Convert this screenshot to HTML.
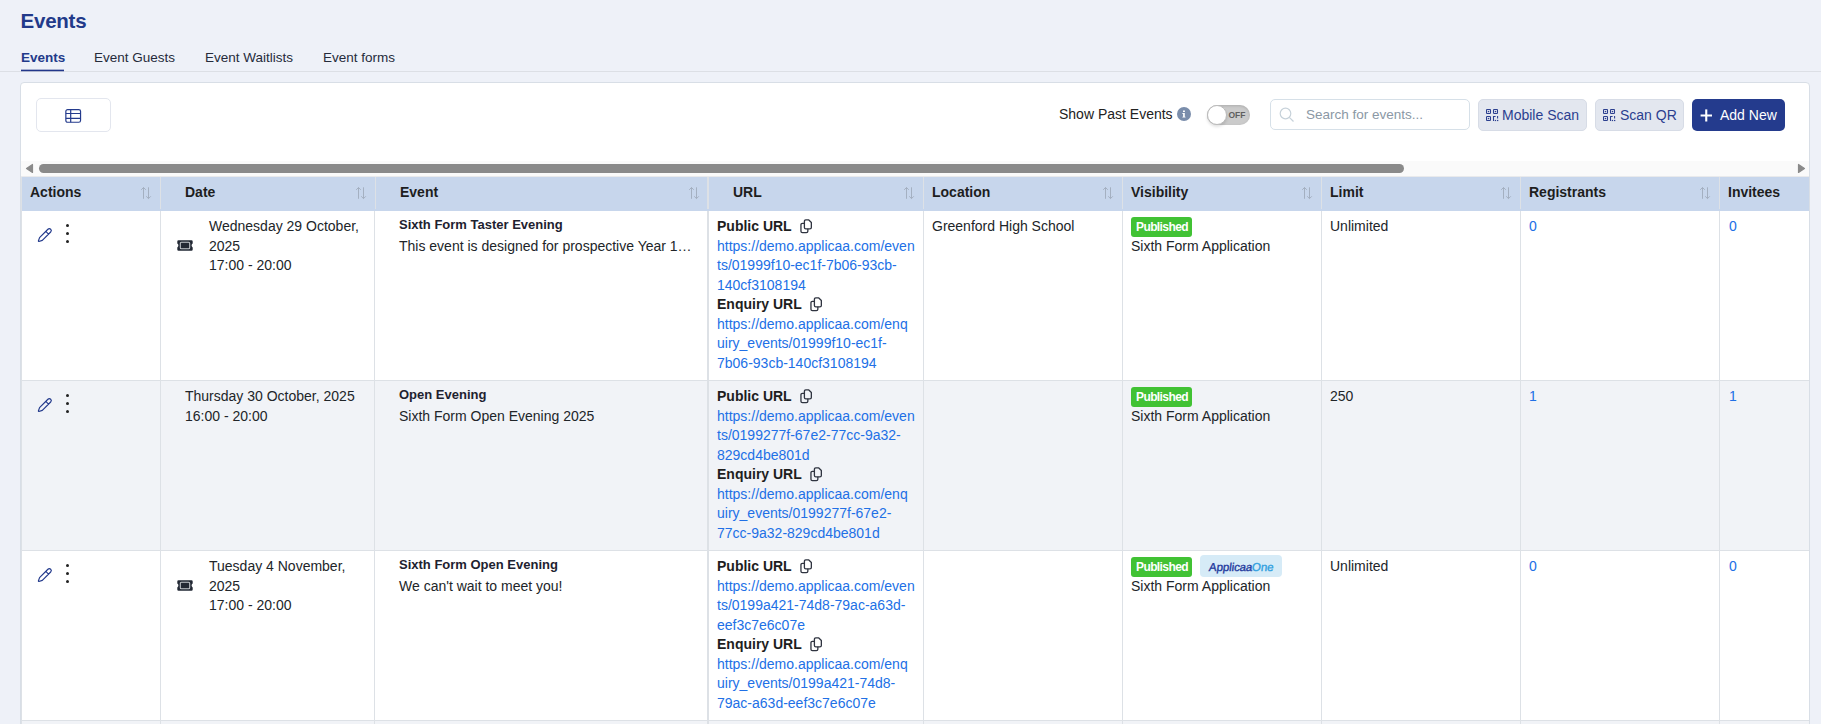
<!DOCTYPE html>
<html><head><meta charset="utf-8">
<style>
*{box-sizing:border-box;margin:0;padding:0}
html,body{width:1821px;height:724px;overflow:hidden}
body{background:#eef1f8;font-family:"Liberation Sans",sans-serif;color:#212529;position:relative;font-size:14px;line-height:19.5px}
.a{position:absolute;white-space:nowrap}
.title{left:20.6px;top:5.6px;font-size:20.5px;line-height:30px;letter-spacing:-0.25px;font-weight:bold;color:#223a8a}
.tab{top:48px;font-size:13.5px;line-height:19px;color:#252b3b}
.tab.on{font-weight:bold;color:#223a8a}
.uline{left:21px;top:70px;width:43px;height:1px;background:#22378a;box-shadow:0 -1px 0 rgba(34,55,138,.35),0 1px 0 rgba(34,55,138,.25)}
.hline{left:0;top:71px;width:1821px;height:1px;background:#dcdfe5}
.card{left:20px;top:82px;width:1790px;height:700px;background:#fff;border:1px solid #d8dee6;border-radius:4px}
.btn-tbl{left:36px;top:98px;width:75px;height:34px;border:1px solid #e3e6ee;border-radius:5px;background:#fff}
.spe{left:1059px;top:105px;font-size:14px;color:#222}
.info{left:1177px;top:107px;width:14px;height:14px;border-radius:50%;background:#7b8eac}
.tog{left:1207px;top:105px;width:43px;height:20px;border-radius:10px;background:#cbcbcb;box-shadow:0 1px 3px rgba(0,0,0,.15) inset}
.knob{left:1207px;top:105px;width:20px;height:20px;border-radius:50%;background:#fff;border:1px solid #bbb;box-shadow:0 2px 3px rgba(0,0,0,.12)}
.off{left:1228.5px;top:109.5px;font-size:8.5px;line-height:11px;font-weight:bold;color:#5f5f5f}
.search{left:1270px;top:99px;width:200px;height:31px;border:1px solid #d6e0e8;border-radius:5px;background:#fff}
.ph{left:1306px;top:105px;color:#8b98a5;font-size:13.5px}
.sbtn{top:99px;height:32px;border:1px solid #d7dce6;border-radius:5px;background:#e3e7ef}
.stxt{top:105.5px;color:#2b3f8f;font-size:14px}
.addbtn{left:1692px;top:99px;width:93px;height:32px;border-radius:5px;background:#243b8d}
.addtxt{left:1720px;top:105.5px;color:#fff;font-size:14px}
.track{left:21px;top:161px;width:1788px;height:15px;background:#fafafa}
.thumb{left:39px;top:164px;width:1365px;height:9px;border-radius:5px;background:#8a8a8a}
.thead{left:22px;top:177px;width:1787px;height:34px;background:#c7d6ec}
.th{top:183px;font-weight:bold;color:#1e1e1e}
.vd{width:1px;background:#dde1e6}
.hd{width:1px;background:#dbe3ef}
.row2{left:21px;top:381px;width:1788px;height:169px;background:#f1f3f7}
.hr{left:21px;width:1788px;height:1px;background:#dde1e6}
.bold13{font-size:13px;font-weight:bold;color:#1e2230}
.link{color:#2170e6}
.pub{width:61px;height:20px;border-radius:3px;background:#41c234;color:#fff;font-weight:bold;font-size:12px;line-height:20px;letter-spacing:-0.6px;padding-left:5px}
.bold14{font-weight:bold;color:#1e1e1e}
.dot{width:3px;height:3px;border-radius:50%;background:#222}
.one{width:82px;height:22px;border-radius:4px;background:#d6ebf7;font-size:11.5px;line-height:21px;padding-top:2px;padding-left:9px;letter-spacing:-0.1px}
.one span{display:inline-block;transform:skewX(-7deg);-webkit-text-stroke:0.35px currentColor}
.oa{color:#233a9e}.oo{color:#2f9fe0}
</style></head><body>
<div class="a title">Events</div>
<div class="a tab on" style="left:21px">Events</div>
<div class="a tab" style="left:94px">Event Guests</div>
<div class="a tab" style="left:205px">Event Waitlists</div>
<div class="a tab" style="left:323px">Event forms</div>
<div class="a hline"></div>
<div class="a uline"></div>

<div class="a card"></div>
<div class="a btn-tbl"></div>
<svg class="a" style="left:65px;top:108px" width="17" height="16" viewBox="0 0 17 16"><g fill="none" stroke="#243b8d" stroke-width="1.2"><rect x="0.85" y="1.55" width="14.7" height="12.7" rx="1.8"/><path d="M0.85 5.5 H15.55 M0.85 10.4 H15.55 M5.7 1.55 V14.25"/></g></svg>

<div class="a spe">Show Past Events</div>
<svg class="a" style="left:1177px;top:107px" width="14" height="14" viewBox="0 0 14 14"><circle cx="7" cy="7" r="7" fill="#7a8dab"/><rect x="6" y="3.5" width="1.9" height="1.5" fill="#fff"/><path d="M5.4 6.1 H7.8 V9.8 H8.5 V10.6 H5.4 V9.8 H6.1 V6.9 H5.4 Z" fill="#fff"/></svg>
<div class="a tog"></div>
<div class="a knob"></div>
<div class="a off">OFF</div>
<div class="a search"></div>
<svg class="a" style="left:1279px;top:107px" width="16" height="16" viewBox="0 0 16 16"><circle cx="6.5" cy="6.5" r="5.3" fill="none" stroke="#c7d2da" stroke-width="1.2"/><line x1="10.3" y1="10.3" x2="14.5" y2="14.5" stroke="#c7d2da" stroke-width="1.2"/></svg>
<div class="a ph">Search for events...</div>

<div class="a sbtn" style="left:1478px;width:109px"></div>
<div class="a sbtn" style="left:1595px;width:89px"></div>
<div class="a addbtn"></div>
<svg class="a" style="left:1486px;top:109px" width="13" height="13" viewBox="0 0 13 13"><g fill="none" stroke="#2b3f8f" stroke-width="1.05"><rect x="0.5" y="0.5" width="4" height="4" rx="0.7"/><rect x="7.5" y="0.5" width="4" height="4" rx="0.7"/><rect x="0.5" y="7.5" width="4" height="4" rx="0.7"/><path d="M7.5 7 V12 M7 7.5 H9.6 M11.6 7 V9.6"/></g><g fill="#2b3f8f"><rect x="1.8" y="1.9" width="1.4" height="1.3"/><rect x="8.8" y="1.9" width="1.4" height="1.3"/><rect x="1.8" y="8.9" width="1.4" height="1.3"/><rect x="8.8" y="10.9" width="1.3" height="1.2"/><rect x="11" y="10.9" width="1.3" height="1.2"/></g></svg>
<div class="a stxt" style="left:1502px">Mobile Scan</div>
<svg class="a" style="left:1603px;top:109px" width="13" height="13" viewBox="0 0 13 13"><g fill="none" stroke="#2b3f8f" stroke-width="1.05"><rect x="0.5" y="0.5" width="4" height="4" rx="0.7"/><rect x="7.5" y="0.5" width="4" height="4" rx="0.7"/><rect x="0.5" y="7.5" width="4" height="4" rx="0.7"/><path d="M7.5 7 V12 M7 7.5 H9.6 M11.6 7 V9.6"/></g><g fill="#2b3f8f"><rect x="1.8" y="1.9" width="1.4" height="1.3"/><rect x="8.8" y="1.9" width="1.4" height="1.3"/><rect x="1.8" y="8.9" width="1.4" height="1.3"/><rect x="8.8" y="10.9" width="1.3" height="1.2"/><rect x="11" y="10.9" width="1.3" height="1.2"/></g></svg>
<div class="a stxt" style="left:1620px">Scan QR</div>
<div class="a addtxt">Add New</div>
<svg class="a" style="left:1700px;top:108.5px" width="13" height="13" viewBox="0 0 13 13"><rect x="5.2" y="0.4" width="2.1" height="12.1" fill="#fff"/><rect x="0.6" y="5.5" width="11.4" height="2" fill="#fff"/></svg>

<div class="a track"></div>
<div class="a thumb"></div>
<div class="a" style="left:21px;top:176px;width:1788px;height:1px;background:#e9eaec"></div>
<svg class="a" style="left:25px;top:163px" width="9" height="11" viewBox="0 0 9 11"><polygon points="7.5,1.5 7.5,9.5 1.5,5.5" fill="#8a8a8a" stroke="#8a8a8a" stroke-width="1.2" stroke-linejoin="round"/></svg>
<svg class="a" style="left:1797px;top:163px" width="9" height="11" viewBox="0 0 9 11"><polygon points="1.5,1.5 1.5,9.5 7.5,5.5" fill="#8a8a8a" stroke="#8a8a8a" stroke-width="1.2" stroke-linejoin="round"/></svg>

<div class="a thead"></div>
<div class="a th" style="left:30px">Actions</div>
<div class="a th" style="left:185px">Date</div>
<div class="a th" style="left:400px">Event</div>
<div class="a th" style="left:733px">URL</div>
<div class="a th" style="left:932px">Location</div>
<div class="a th" style="left:1131px">Visibility</div>
<div class="a th" style="left:1330px">Limit</div>
<div class="a th" style="left:1529px">Registrants</div>
<div class="a th" style="left:1728px">Invitees</div>

<svg class="a" style="left:141px;top:186px" width="11" height="14" viewBox="0 0 11 14"><g fill="none" stroke="#a2aebf" stroke-width="0.95"><path d="M2.5 1.5 V12.8 M0.2 3.8 L2.5 1.5 L4.8 3.8"/><path d="M7.5 1.3 V12.6 M5.2 10.3 L7.5 12.6 L9.8 10.3"/></g></svg><svg class="a" style="left:356px;top:186px" width="11" height="14" viewBox="0 0 11 14"><g fill="none" stroke="#a2aebf" stroke-width="0.95"><path d="M2.5 1.5 V12.8 M0.2 3.8 L2.5 1.5 L4.8 3.8"/><path d="M7.5 1.3 V12.6 M5.2 10.3 L7.5 12.6 L9.8 10.3"/></g></svg><svg class="a" style="left:689px;top:186px" width="11" height="14" viewBox="0 0 11 14"><g fill="none" stroke="#a2aebf" stroke-width="0.95"><path d="M2.5 1.5 V12.8 M0.2 3.8 L2.5 1.5 L4.8 3.8"/><path d="M7.5 1.3 V12.6 M5.2 10.3 L7.5 12.6 L9.8 10.3"/></g></svg><svg class="a" style="left:904px;top:186px" width="11" height="14" viewBox="0 0 11 14"><g fill="none" stroke="#a2aebf" stroke-width="0.95"><path d="M2.5 1.5 V12.8 M0.2 3.8 L2.5 1.5 L4.8 3.8"/><path d="M7.5 1.3 V12.6 M5.2 10.3 L7.5 12.6 L9.8 10.3"/></g></svg><svg class="a" style="left:1103px;top:186px" width="11" height="14" viewBox="0 0 11 14"><g fill="none" stroke="#a2aebf" stroke-width="0.95"><path d="M2.5 1.5 V12.8 M0.2 3.8 L2.5 1.5 L4.8 3.8"/><path d="M7.5 1.3 V12.6 M5.2 10.3 L7.5 12.6 L9.8 10.3"/></g></svg><svg class="a" style="left:1302px;top:186px" width="11" height="14" viewBox="0 0 11 14"><g fill="none" stroke="#a2aebf" stroke-width="0.95"><path d="M2.5 1.5 V12.8 M0.2 3.8 L2.5 1.5 L4.8 3.8"/><path d="M7.5 1.3 V12.6 M5.2 10.3 L7.5 12.6 L9.8 10.3"/></g></svg><svg class="a" style="left:1501px;top:186px" width="11" height="14" viewBox="0 0 11 14"><g fill="none" stroke="#a2aebf" stroke-width="0.95"><path d="M2.5 1.5 V12.8 M0.2 3.8 L2.5 1.5 L4.8 3.8"/><path d="M7.5 1.3 V12.6 M5.2 10.3 L7.5 12.6 L9.8 10.3"/></g></svg><svg class="a" style="left:1700px;top:186px" width="11" height="14" viewBox="0 0 11 14"><g fill="none" stroke="#a2aebf" stroke-width="0.95"><path d="M2.5 1.5 V12.8 M0.2 3.8 L2.5 1.5 L4.8 3.8"/><path d="M7.5 1.3 V12.6 M5.2 10.3 L7.5 12.6 L9.8 10.3"/></g></svg>
<div class="a row2"></div>
<div class="a row2" style="top:721px"></div>
<div class="a hr" style="top:380px"></div>
<div class="a hr" style="top:550px"></div>
<div class="a hr" style="top:720px"></div>


<div class="a vd" style="left:160px;top:177px;height:32px;width:1px"></div>
<div class="a vd" style="left:375px;top:177px;height:32px;width:1px"></div>
<div class="a vd" style="left:707px;top:177px;height:32px;width:2px"></div>
<div class="a vd" style="left:923px;top:177px;height:32px;width:1px"></div>
<div class="a vd" style="left:1122px;top:177px;height:32px;width:1px"></div>
<div class="a vd" style="left:1321px;top:177px;height:32px;width:1px"></div>
<div class="a vd" style="left:1520px;top:177px;height:32px;width:1px"></div>
<div class="a vd" style="left:1719px;top:177px;height:32px;width:1px"></div>
<div class="a vd" style="left:160px;top:211px;height:513px;width:1px"></div>
<div class="a vd" style="left:374px;top:211px;height:513px;width:1px"></div>
<div class="a vd" style="left:707px;top:211px;height:513px;width:2px"></div>
<div class="a vd" style="left:923px;top:211px;height:513px;width:1px"></div>
<div class="a vd" style="left:1122px;top:211px;height:513px;width:1px"></div>
<div class="a vd" style="left:1321px;top:211px;height:513px;width:1px"></div>
<div class="a vd" style="left:1520px;top:211px;height:513px;width:1px"></div>
<div class="a vd" style="left:1719px;top:211px;height:513px;width:1px"></div>
<div class="a vd" style="left:21px;top:177px;height:547px;width:1px"></div>
<!-- ROWS -->
<svg class="a" style="left:35px;top:225px" width="20" height="20" viewBox="0 0 20 20"><g transform="translate(3.4 16.5) rotate(-45)" fill="none" stroke="#233a8c" stroke-width="1.15" stroke-linejoin="round"><path d="M3.6 -1.95 H15.4 A1.95 1.95 0 0 1 15.4 1.95 H3.6 L0.3 0.35 V-0.35 Z M12.4 -1.95 V1.95"/></g></svg>
<div class="a dot" style="left:65.6px;top:224px"></div><div class="a dot" style="left:65.6px;top:232px"></div><div class="a dot" style="left:65.6px;top:240px"></div>
<svg class="a" style="left:177px;top:240.1px" width="16" height="11" viewBox="0 0 16 11"><path d="M1.5 0.3 H14.5 Q15.7 0.3 15.7 1.5 V3.6 Q14.6 4.2 14.6 5.5 Q14.6 6.8 15.7 7.4 V9.5 Q15.7 10.7 14.5 10.7 H1.5 Q0.3 10.7 0.3 9.5 V7.4 Q1.4 6.8 1.4 5.5 Q1.4 4.2 0.3 3.6 V1.5 Q0.3 0.3 1.5 0.3 Z" fill="#222834"/><rect x="3.3" y="2.3" width="9.4" height="6.4" rx="1" fill="none" stroke="#c3c7cd" stroke-width="1.05"/></svg>
<div class="a" style="left:209px;top:217.0px">Wednesday 29 October,<br>2025<br>17:00 - 20:00</div>
<div class="a bold13" style="left:399px;top:215.0px">Sixth Form Taster Evening</div>
<div class="a" style="left:399px;top:236.7px">This event is designed for prospective Year 1…</div>
<div class="a" style="left:717px;top:217.00px;line-height:19.5px"><b class="bold14">Public URL</b><br><span class="link">https://demo.applicaa.com/even<br>ts/01999f10-ec1f-7b06-93cb-<br>140cf3108194</span><br><b class="bold14">Enquiry URL</b><br><span class="link">https://demo.applicaa.com/enq<br>uiry_events/01999f10-ec1f-<br>7b06-93cb-140cf3108194</span></div>
<svg class="a" style="left:799px;top:218px" width="15" height="16" viewBox="0 0 15 16"><g fill="none" stroke="#2f3440" stroke-width="1.3" stroke-linejoin="round"><path d="M6.8 1.95 H9.8 L12.35 4.5 V9.4 Q12.35 10.85 10.9 10.85 H6.85 Q5.4 10.85 5.4 9.4 V3.4 Q5.4 1.95 6.8 1.95 Z"/><path d="M5.4 5.4 H3.4 Q1.95 5.4 1.95 6.85 V13.2 Q1.95 14.65 3.4 14.65 H7.4 Q8.85 14.65 8.85 13.2 V10.85"/></g></svg>
<svg class="a" style="left:809px;top:296.0px" width="15" height="16" viewBox="0 0 15 16"><g fill="none" stroke="#2f3440" stroke-width="1.3" stroke-linejoin="round"><path d="M6.8 1.95 H9.8 L12.35 4.5 V9.4 Q12.35 10.85 10.9 10.85 H6.85 Q5.4 10.85 5.4 9.4 V3.4 Q5.4 1.95 6.8 1.95 Z"/><path d="M5.4 5.4 H3.4 Q1.95 5.4 1.95 6.85 V13.2 Q1.95 14.65 3.4 14.65 H7.4 Q8.85 14.65 8.85 13.2 V10.85"/></g></svg>
<div class="a" style="left:932px;top:217.0px">Greenford High School</div>
<div class="a pub" style="left:1131px;top:217px">Published</div>
<div class="a" style="left:1131px;top:237.0px">Sixth Form Application</div>
<div class="a" style="left:1330px;top:217.0px">Unlimited</div>
<div class="a link" style="left:1529px;top:217.0px">0</div>
<div class="a link" style="left:1729px;top:217.0px">0</div>
<svg class="a" style="left:35px;top:395px" width="20" height="20" viewBox="0 0 20 20"><g transform="translate(3.4 16.5) rotate(-45)" fill="none" stroke="#233a8c" stroke-width="1.15" stroke-linejoin="round"><path d="M3.6 -1.95 H15.4 A1.95 1.95 0 0 1 15.4 1.95 H3.6 L0.3 0.35 V-0.35 Z M12.4 -1.95 V1.95"/></g></svg>
<div class="a dot" style="left:65.6px;top:394px"></div><div class="a dot" style="left:65.6px;top:402px"></div><div class="a dot" style="left:65.6px;top:410px"></div>
<div class="a" style="left:185px;top:387.0px">Thursday 30 October, 2025<br>16:00 - 20:00</div>
<div class="a bold13" style="left:399px;top:385.0px">Open Evening</div>
<div class="a" style="left:399px;top:406.7px">Sixth Form Open Evening 2025</div>
<div class="a" style="left:717px;top:387.00px;line-height:19.5px"><b class="bold14">Public URL</b><br><span class="link">https://demo.applicaa.com/even<br>ts/0199277f-67e2-77cc-9a32-<br>829cd4be801d</span><br><b class="bold14">Enquiry URL</b><br><span class="link">https://demo.applicaa.com/enq<br>uiry_events/0199277f-67e2-<br>77cc-9a32-829cd4be801d</span></div>
<svg class="a" style="left:799px;top:388px" width="15" height="16" viewBox="0 0 15 16"><g fill="none" stroke="#2f3440" stroke-width="1.3" stroke-linejoin="round"><path d="M6.8 1.95 H9.8 L12.35 4.5 V9.4 Q12.35 10.85 10.9 10.85 H6.85 Q5.4 10.85 5.4 9.4 V3.4 Q5.4 1.95 6.8 1.95 Z"/><path d="M5.4 5.4 H3.4 Q1.95 5.4 1.95 6.85 V13.2 Q1.95 14.65 3.4 14.65 H7.4 Q8.85 14.65 8.85 13.2 V10.85"/></g></svg>
<svg class="a" style="left:809px;top:466.0px" width="15" height="16" viewBox="0 0 15 16"><g fill="none" stroke="#2f3440" stroke-width="1.3" stroke-linejoin="round"><path d="M6.8 1.95 H9.8 L12.35 4.5 V9.4 Q12.35 10.85 10.9 10.85 H6.85 Q5.4 10.85 5.4 9.4 V3.4 Q5.4 1.95 6.8 1.95 Z"/><path d="M5.4 5.4 H3.4 Q1.95 5.4 1.95 6.85 V13.2 Q1.95 14.65 3.4 14.65 H7.4 Q8.85 14.65 8.85 13.2 V10.85"/></g></svg>
<div class="a pub" style="left:1131px;top:387px">Published</div>
<div class="a" style="left:1131px;top:407.0px">Sixth Form Application</div>
<div class="a" style="left:1330px;top:387.0px">250</div>
<div class="a link" style="left:1529px;top:387.0px">1</div>
<div class="a link" style="left:1729px;top:387.0px">1</div>
<svg class="a" style="left:35px;top:565px" width="20" height="20" viewBox="0 0 20 20"><g transform="translate(3.4 16.5) rotate(-45)" fill="none" stroke="#233a8c" stroke-width="1.15" stroke-linejoin="round"><path d="M3.6 -1.95 H15.4 A1.95 1.95 0 0 1 15.4 1.95 H3.6 L0.3 0.35 V-0.35 Z M12.4 -1.95 V1.95"/></g></svg>
<div class="a dot" style="left:65.6px;top:564px"></div><div class="a dot" style="left:65.6px;top:572px"></div><div class="a dot" style="left:65.6px;top:580px"></div>
<svg class="a" style="left:177px;top:580.1px" width="16" height="11" viewBox="0 0 16 11"><path d="M1.5 0.3 H14.5 Q15.7 0.3 15.7 1.5 V3.6 Q14.6 4.2 14.6 5.5 Q14.6 6.8 15.7 7.4 V9.5 Q15.7 10.7 14.5 10.7 H1.5 Q0.3 10.7 0.3 9.5 V7.4 Q1.4 6.8 1.4 5.5 Q1.4 4.2 0.3 3.6 V1.5 Q0.3 0.3 1.5 0.3 Z" fill="#222834"/><rect x="3.3" y="2.3" width="9.4" height="6.4" rx="1" fill="none" stroke="#c3c7cd" stroke-width="1.05"/></svg>
<div class="a" style="left:209px;top:557.0px">Tuesday 4 November,<br>2025<br>17:00 - 20:00</div>
<div class="a bold13" style="left:399px;top:555.0px">Sixth Form Open Evening</div>
<div class="a" style="left:399px;top:576.7px">We can't wait to meet you!</div>
<div class="a" style="left:717px;top:557.00px;line-height:19.5px"><b class="bold14">Public URL</b><br><span class="link">https://demo.applicaa.com/even<br>ts/0199a421-74d8-79ac-a63d-<br>eef3c7e6c07e</span><br><b class="bold14">Enquiry URL</b><br><span class="link">https://demo.applicaa.com/enq<br>uiry_events/0199a421-74d8-<br>79ac-a63d-eef3c7e6c07e</span></div>
<svg class="a" style="left:799px;top:558px" width="15" height="16" viewBox="0 0 15 16"><g fill="none" stroke="#2f3440" stroke-width="1.3" stroke-linejoin="round"><path d="M6.8 1.95 H9.8 L12.35 4.5 V9.4 Q12.35 10.85 10.9 10.85 H6.85 Q5.4 10.85 5.4 9.4 V3.4 Q5.4 1.95 6.8 1.95 Z"/><path d="M5.4 5.4 H3.4 Q1.95 5.4 1.95 6.85 V13.2 Q1.95 14.65 3.4 14.65 H7.4 Q8.85 14.65 8.85 13.2 V10.85"/></g></svg>
<svg class="a" style="left:809px;top:636.0px" width="15" height="16" viewBox="0 0 15 16"><g fill="none" stroke="#2f3440" stroke-width="1.3" stroke-linejoin="round"><path d="M6.8 1.95 H9.8 L12.35 4.5 V9.4 Q12.35 10.85 10.9 10.85 H6.85 Q5.4 10.85 5.4 9.4 V3.4 Q5.4 1.95 6.8 1.95 Z"/><path d="M5.4 5.4 H3.4 Q1.95 5.4 1.95 6.85 V13.2 Q1.95 14.65 3.4 14.65 H7.4 Q8.85 14.65 8.85 13.2 V10.85"/></g></svg>
<div class="a pub" style="left:1131px;top:557px">Published</div>
<div class="a one" style="left:1200px;top:555px"><span class="oa">Applicaa</span><span class="oo">One</span></div>
<div class="a" style="left:1131px;top:577.0px">Sixth Form Application</div>
<div class="a" style="left:1330px;top:557.0px">Unlimited</div>
<div class="a link" style="left:1529px;top:557.0px">0</div>
<div class="a link" style="left:1729px;top:557.0px">0</div>
</body></html>
